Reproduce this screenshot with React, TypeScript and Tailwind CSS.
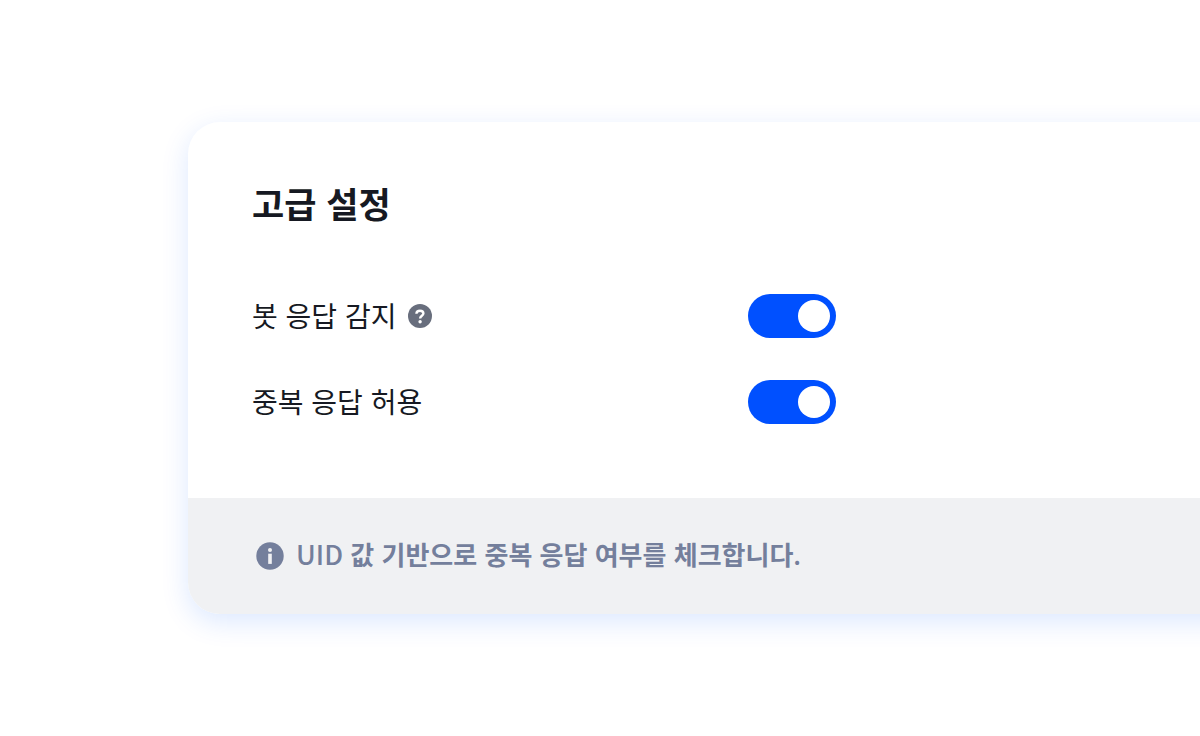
import { useState } from "react";

interface SettingRowProps {
  id: string;
  label: string;
  help?: boolean;
}

function HelpIcon() {
  return (
    <svg className="w-6 h-6" viewBox="0 0 24 24" fill="none">
      <circle cx="12" cy="12" r="12" fill="#686e7d" />
      <path
        d="M8.4 9.7C8.5 7.9 10 6.8 12 6.8c2.1 0 3.4 1 3.4 2.7 0 2.2-3.3 2.3-3.3 5"
        stroke="white"
        strokeWidth="2.4"
      />
      <circle cx="12.1" cy="17.7" r="1.7" fill="white" />
    </svg>
  );
}

function InfoIcon() {
  return (
    <svg className="w-7 h-7 shrink-0" viewBox="0 0 28 28" aria-hidden="true">
      <circle cx="14" cy="14" r="13.7" fill="#747f9c" />
      <circle cx="14" cy="8" r="2" fill="#f0f1f3" />
      <rect x="12.2" y="11.7" width="3.6" height="10.2" fill="#f0f1f3" />
    </svg>
  );
}

function SettingRow({ id, label, help }: SettingRowProps) {
  const [enabled, setEnabled] = useState(true);

  return (
    <div className="flex items-center h-11">
      <div className="w-[496px] flex items-center gap-3">
        <label htmlFor={id} className="pb-0.5 text-[28px] leading-[42px] text-[#161922]">
          {label}
        </label>
        {help && (
          <button type="button" aria-label="도움말">
            <HelpIcon />
          </button>
        )}
      </div>
      <button
        id={id}
        type="button"
        role="switch"
        aria-checked={enabled}
        onClick={() => setEnabled(!enabled)}
        className={`w-[88px] h-11 p-1.5 rounded-full flex items-center ${
          enabled ? "bg-[#0050ff] justify-end" : "bg-slate-300 justify-start"
        }`}
      >
        <span className="w-8 h-8 rounded-full bg-white" />
      </button>
    </div>
  );
}

export default function App() {
  return (
    <main
      lang="ko"
      className="min-h-screen overflow-hidden bg-white pl-[188px] py-[122px] font-['Noto_Sans_CJK_KR',sans-serif]"
    >
      <section className="-mr-16 rounded-[32px] overflow-hidden bg-white shadow-[0_8px_28px_rgba(0,90,255,0.14)]">
        <div className="px-16 pt-[54px] pb-[74px]">
          <h1 className="text-[35px] leading-[54px] font-bold text-[#161922]">고급 설정</h1>

          {/* Toggles */}
          <div className="mt-16 flex flex-col gap-[42px]">
            <SettingRow id="bot-detection" label="봇 응답 감지" help />
            <SettingRow id="allow-duplicates" label="중복 응답 허용" />
          </div>
        </div>

        {/* Notice */}
        <div className="px-[68px] py-9 flex items-center gap-3 bg-[#f0f1f3] text-[#747f9c]">
          <InfoIcon />
          <p className="pb-1 text-[26px] leading-10 font-bold">
            <span className="text-[27px] leading-none font-medium">UID</span> 값 기반으로 중복 응답
            여부를 체크합니다<span className="font-medium">.</span>
          </p>
        </div>
      </section>
    </main>
  );
}
